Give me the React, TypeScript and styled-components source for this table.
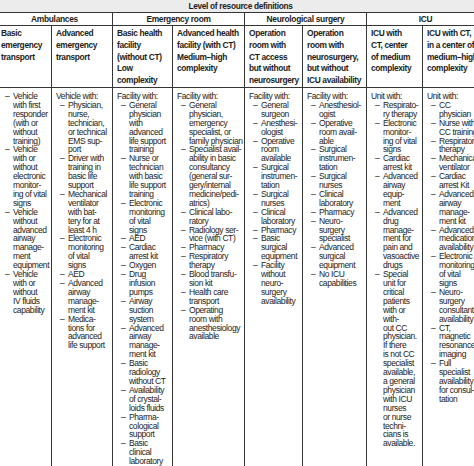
import React from 'react';
import styled, { createGlobalStyle } from 'styled-components';

const FONT = `"Liberation Sans", Arial, sans-serif`;
const LINE = '#363636';

const GlobalStyle = createGlobalStyle`
  html, body {
    margin: 0;
    padding: 0;
    background: #fff;
  }
  body {
    font-family: ${FONT};
    color: #1c1c1c;
  }
`;

const Frame = styled.div`
  width: 474px;
  height: 466px;
  overflow: hidden;
  background: #fff;
`;

const Table = styled.table`
  width: 488px;
  margin-left: -4px;
  border-collapse: collapse;
  table-layout: fixed;
  font-size: 8.5px;
  letter-spacing: -0.4px;
`;

const TitleCell = styled.th`
  height: 12px;
  padding: 0;
  background: #ececec;
  border-bottom: 1px solid ${LINE};
  font-size: 8.3px;
  letter-spacing: -0.3px;
  font-weight: bold;
  text-align: center;
  line-height: 11px;
`;

const GroupCell = styled.th`
  height: 12px;
  padding: 0;
  border: 1px solid ${LINE};
  font-size: 8.4px;
  letter-spacing: -0.3px;
  font-weight: bold;
  text-align: center;
  line-height: 12px;
`;

const HeadCell = styled.th`
  height: 58px;
  padding: 2px 4px 0;
  border: 1px solid ${LINE};
  font-size: 8.4px;
  letter-spacing: -0.35px;
  font-weight: bold;
  text-align: left;
  vertical-align: top;
  line-height: 11.8px;
  white-space: pre;
`;

const BodyCell = styled.td`
  height: 420px;
  padding: 4px 4px 0;
  border: 1px solid ${LINE};
  vertical-align: top;
  line-height: 8.9px;
  white-space: pre;
`;

const Lead = styled.div``;

const Items = styled.ul`
  list-style: none;
  margin: 0;
  padding: 0;
`;

const Item = styled.li`
  display: flex;
`;

const Dash = styled.span`
  flex: none;
  width: 12px;
  padding-left: 4px;
  box-sizing: border-box;
`;

type Column = { width: number; head: string; lead?: string; items: string[] };

const groups = [
  { label: 'Ambulances', span: 2 },
  { label: 'Emergency room', span: 2 },
  { label: 'Neurological surgery', span: 2 },
  { label: 'ICU', span: 2 },
];

const columns: Column[] = [
  {
    width: 55,
    head: 'Basic\nemergency\ntransport',
    items: [
      'Vehicle\nwith first\nresponder\n(with or\nwithout\ntraining)',
      'Vehicle\nwith or\nwithout\nelectronic\nmonitor-\ning of vital\nsigns',
      'Vehicle\nwithout\nadvanced\nairway\nmanage-\nment\nequipment',
      'Vehicle\nwith or\nwithout\nIV fluids\ncapability',
    ],
  },
  {
    width: 61,
    head: 'Advanced\nemergency\ntransport',
    lead: 'Vehicle with:',
    items: [
      'Physician,\nnurse,\ntechnician,\nor technical\nEMS sup-\nport',
      'Driver with\ntraining in\nbasic life\nsupport',
      'Mechanical\nventilator\nwith bat-\ntery for at\nleast 4 h',
      'Electronic\nmonitoring\nof vital\nsigns',
      'AED',
      'Advanced\nairway\nmanage-\nment kit',
      'Medica-\ntions for\nadvanced\nlife support',
    ],
  },
  {
    width: 60,
    head: 'Basic health\nfacility\n(without CT)\nLow\ncomplexity',
    lead: 'Facility with:',
    items: [
      'General\nphysician\nwith\nadvanced\nlife support\ntraining',
      'Nurse or\ntechnician\nwith basic\nlife support\ntraining',
      'Electronic\nmonitoring\nof vital\nsigns',
      'AED',
      'Cardiac\narrest kit',
      'Oxygen',
      'Drug\ninfusion\npumps',
      'Airway\nsuction\nsystem',
      'Advanced\nairway\nmanage-\nment kit',
      'Basic\nradiology\nwithout CT',
      'Availability\nof crystal-\nloids fluids',
      'Pharma-\ncological\nsupport',
      'Basic\nclinical\nlaboratory',
    ],
  },
  {
    width: 72,
    head: 'Advanced health\nfacility (with CT)\nMedium–high\ncomplexity',
    lead: 'Facility with:',
    items: [
      'General\nphysician,\nemergency\nspecialist, or\nfamily physician',
      'Specialist avail-\nability in basic\nconsultancy\n(general sur-\ngery/internal\nmedicine/pedi-\natrics)',
      'Clinical labo-\nratory',
      'Radiology ser-\nvice (with CT)',
      'Pharmacy',
      'Respiratory\ntherapy',
      'Blood transfu-\nsion kit',
      'Health care\ntransport',
      'Operating\nroom with\nanesthesiology\navailable',
    ],
  },
  {
    width: 58,
    head: 'Operation\nroom with\nCT access\nbut without\nneurosurgery',
    lead: 'Facility with:',
    items: [
      'General\nsurgeon',
      'Anesthesi-\nologist',
      'Operative\nroom\navailable',
      'Surgical\ninstrumen-\ntation',
      'Surgical\nnurses',
      'Clinical\nlaboratory',
      'Pharmacy',
      'Basic\nsurgical\nequipment',
      'Facility\nwithout\nneuro-\nsurgery\navailability',
    ],
  },
  {
    width: 64,
    head: 'Operation\nroom with\nneurosurgery,\nbut without\nICU availability',
    lead: 'Facility with:',
    items: [
      'Anesthesiol-\nogist',
      'Operative\nroom avail-\nable',
      'Surgical\ninstrumen-\ntation',
      'Surgical\nnurses',
      'Clinical\nlaboratory',
      'Pharmacy',
      'Neuro-\nsurgery\nspecialist',
      'Advanced\nsurgical\nequipment',
      'No ICU\ncapabilities',
    ],
  },
  {
    width: 56,
    head: 'ICU with\nCT, center\nof medium\ncomplexity',
    lead: 'Unit with:',
    items: [
      'Respirato-\nry therapy',
      'Electronic\nmonitor-\ning of vital\nsigns',
      'Cardiac\narrest kit',
      'Advanced\nairway\nequip-\nment',
      'Advanced\ndrug\nmanage-\nment for\npain and\nvasoactive\ndrugs',
      'Special\nunit for\ncritical\npatients\nwith or\nwith-\nout CC\nphysician.\nIf there\nis not CC\nspecialist\navailable,\na general\nphysician\nwith ICU\nnurses\nor nurse\ntechni-\ncians is\navailable.',
    ],
  },
  {
    width: 62,
    head: 'ICU with CT,\nin a center of\nmedium–high\ncomplexity',
    lead: 'Unit with:',
    items: [
      'CC\nphysician',
      'Nurse with\nCC training',
      'Respiratory\ntherapy',
      'Mechanical\nventilator',
      'Cardiac\narrest Kit',
      'Advanced\nairway\nmanage-\nment kit',
      'Advanced\nmedication\navailability',
      'Electronic\nmonitoring\nof vital\nsigns',
      'Neuro-\nsurgery\nconsultant\navailability',
      'CT,\nmagnetic\nresonance\nimaging',
      'Full\nspecialist\navailability\nfor consul-\ntation',
    ],
  },
];

function App() {
  return (
    <Frame>
      <GlobalStyle />
      <Table>
        <colgroup>
          {columns.map((c, i) => (
            <col key={i} style={{ width: c.width }} />
          ))}
        </colgroup>
        <thead>
          <tr>
            <TitleCell colSpan={8}>Level of resource definitions</TitleCell>
          </tr>
          <tr>
            {groups.map((g) => (
              <GroupCell key={g.label} colSpan={g.span}>
                {g.label}
              </GroupCell>
            ))}
          </tr>
          <tr>
            {columns.map((c, i) => (
              <HeadCell key={i}>{c.head}</HeadCell>
            ))}
          </tr>
        </thead>
        <tbody>
          <tr>
            {columns.map((c, i) => (
              <BodyCell key={i}>
                {c.lead && <Lead>{c.lead}</Lead>}
                <Items>
                  {c.items.map((it, j) => (
                    <Item key={j}>
                      <Dash>–</Dash>
                      <span>{it}</span>
                    </Item>
                  ))}
                </Items>
              </BodyCell>
            ))}
          </tr>
        </tbody>
      </Table>
    </Frame>
  );
}

export default App;
